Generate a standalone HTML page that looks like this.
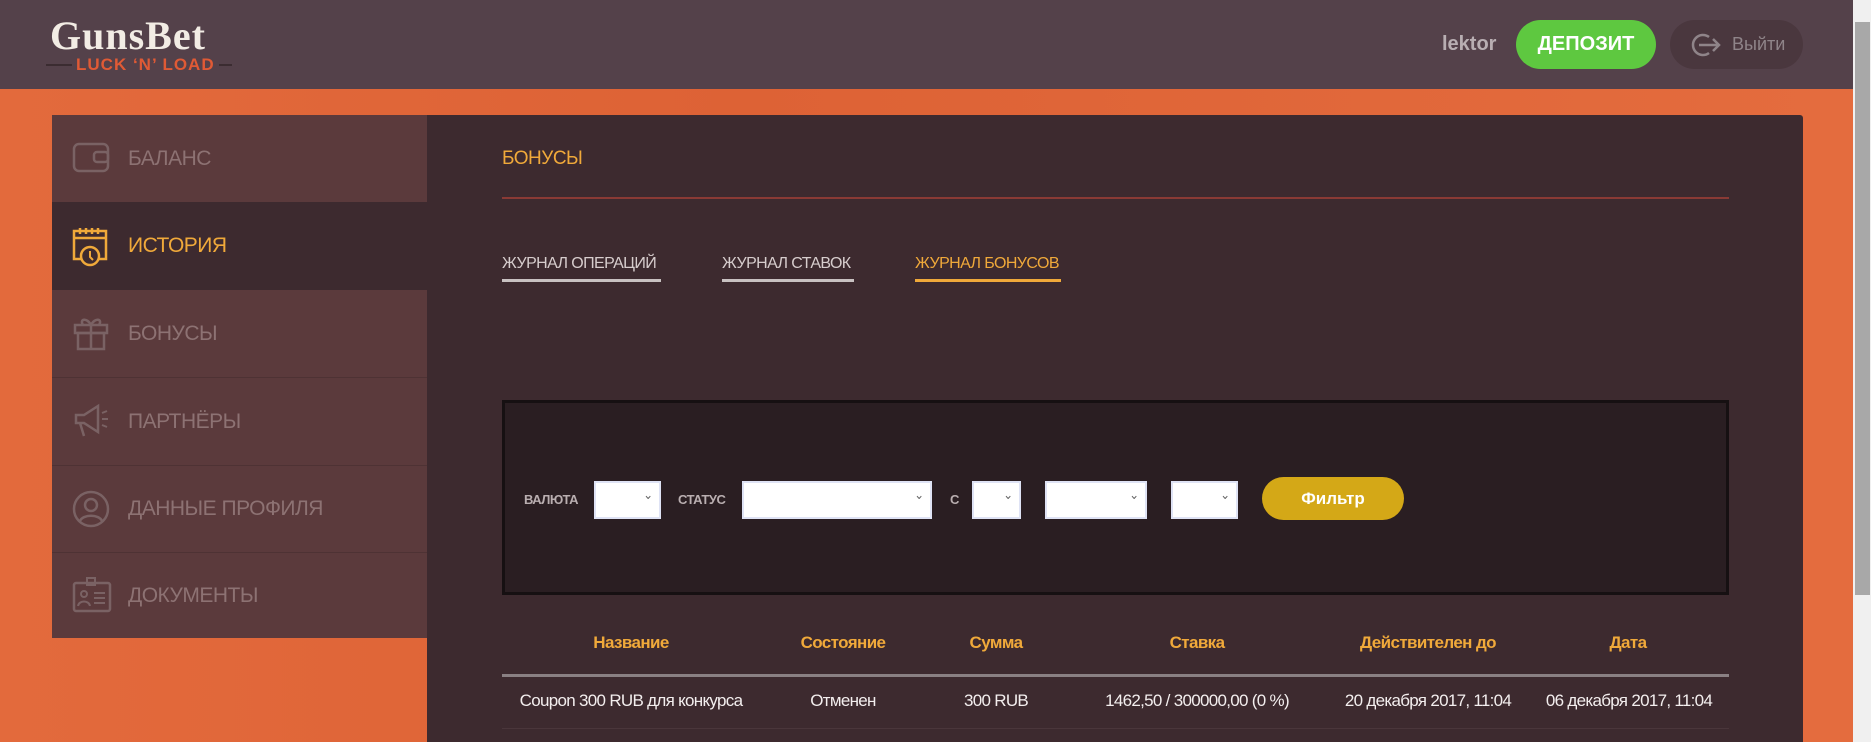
<!DOCTYPE html>
<html><head><meta charset="utf-8"><style>
*{margin:0;padding:0;box-sizing:border-box}
body{width:1871px;height:742px;overflow:hidden;position:relative;background:#e0673b;font-family:"Liberation Sans Narrow","Liberation Sans","DejaVu Sans Condensed",sans-serif;}
.bg{position:absolute;left:0;top:89px;width:1853px;height:653px;background:linear-gradient(90deg,#e36a3c 0%,#dd6235 40%,#e46c3e 100%)}
.hdr{position:absolute;left:0;top:0;width:1853px;height:89px;background:#54414a}
.abs{position:absolute;white-space:nowrap}
.side{position:absolute;left:52px;top:115px;width:375px;height:523px;background:#5b3a3c}
.item{position:absolute;left:0;width:375px;height:88px;border-bottom:1px solid #4e3234;color:#8d7273;font-size:21px;line-height:88px;padding-left:76px;letter-spacing:-.5px}
.item.act{background:#3d2a2f;color:#f0a93a;border:none}
.item svg{position:absolute;left:20px;top:25px}
.main{position:absolute;left:427px;top:115px;width:1376px;height:627px;background:#3d2a2f;border-radius:0 3px 0 0}
.tab{position:absolute;top:255px;font-size:16px;color:#d7cdcd;padding-bottom:6px;border-bottom:3px solid #c8c1c1;white-space:nowrap;letter-spacing:-.6px}
.fbox{position:absolute;left:502px;top:400px;width:1227px;height:195px;background:#2a1e22;border:3px solid #161012}
.lbl{position:absolute;top:492px;font-size:13px;font-weight:bold;color:#b9aeb0;letter-spacing:-.5px}
.sel{position:absolute;top:481px;height:38px;background:#fff;border:2px solid #dfe3f5}
.sel:after{content:"⌄";position:absolute;right:6px;top:4px;font-size:13px;color:#666}
.th{position:absolute;top:633px;font-size:17px;font-weight:bold;color:#f0a93a;transform:translateX(-50%);white-space:nowrap;letter-spacing:-.6px}
.td{position:absolute;top:691px;font-size:17px;color:#f3eeee;transform:translateX(-50%);white-space:nowrap;letter-spacing:-.7px}
</style></head><body>
<div class="bg"></div>
<div class="hdr"></div>
<div class="abs" style="left:50px;top:12px;color:#f2ece4;font-family:'Liberation Serif',serif;font-size:40px;font-weight:bold;letter-spacing:1px">GunsBet</div>
<div class="abs" style="left:46px;top:64px;width:186px;height:2px;background:#3b2c31"></div>
<div class="abs" style="left:72px;top:55px;padding:0 4px;background:#54414a;color:#e05a35;font-size:17px;font-weight:bold;letter-spacing:1px">LUCK ‘N’ LOAD</div>
<div class="abs" style="left:1442px;top:33px;color:#b8aeb2;font-size:20px;font-weight:bold">lektor</div>
<div class="abs" style="left:1516px;top:20px;width:140px;height:49px;border-radius:25px;background:#5ec840;color:#fff;font-size:20px;font-weight:bold;text-align:center;line-height:49px">ДЕПОЗИТ</div>
<div class="abs" style="left:1670px;top:20px;width:133px;height:49px;border-radius:25px;background:#4a373e;color:#8f8489;font-size:18px;line-height:49px;padding-left:62px">Выйти</div>
<svg class="abs" style="left:1690px;top:32px" width="34" height="26" viewBox="0 0 34 26"><path d="M19 5A10 10 0 1 0 19 21" fill="none" stroke="#8f8489" stroke-width="2.5"/><path d="M9 13H29M23 7l6 6-6 6" fill="none" stroke="#8f8489" stroke-width="2.5"/></svg>
<div class="abs" style="left:1853px;top:0;width:18px;height:742px;background:#f0f0f0"></div>
<div class="abs" style="left:1855px;top:22px;width:15px;height:573px;background:#a8a8a8"></div>

<div class="side">
 <div class="item" style="top:0"><svg width="38" height="34" viewBox="0 0 38 34"><rect x="2" y="4" width="34" height="27" rx="5" fill="none" stroke="#7a6264" stroke-width="2.5"/><rect x="22" y="12" width="14" height="10" rx="3" fill="none" stroke="#7a6264" stroke-width="2.5"/></svg>БАЛАНС</div>
 <div class="item act" style="top:87px"><svg width="38" height="40" viewBox="0 0 38 40"><rect x="2" y="4" width="32" height="28" fill="none" stroke="#f0a93a" stroke-width="2.5"/><path d="M2 11H34M8 1v6M14 1v6M20 1v6M26 1v6" stroke="#f0a93a" stroke-width="2.5"/><circle cx="18" cy="29" r="9" fill="#3d2a2f" stroke="#f0a93a" stroke-width="2.5"/><path d="M18 24v6l3 3" fill="none" stroke="#f0a93a" stroke-width="2"/></svg>ИСТОРИЯ</div>
 <div class="item" style="top:175px"><svg width="38" height="36" viewBox="0 0 38 36"><rect x="3" y="10" width="32" height="8" fill="none" stroke="#7a6264" stroke-width="2.5"/><rect x="6" y="18" width="26" height="16" fill="none" stroke="#7a6264" stroke-width="2.5"/><path d="M19 10v24M19 10c-4-8-12-6-8 0M19 10c4-8 12-6 8 0" fill="none" stroke="#7a6264" stroke-width="2.5"/></svg>БОНУСЫ</div>
 <div class="item" style="top:263px"><svg width="40" height="36" viewBox="0 0 40 36"><path d="M4 12h8l14-9v26l-14-9H4zM8 20l4 13" fill="none" stroke="#7a6264" stroke-width="2.5"/><path d="M30 10l5-2M30 16h6M30 22l5 2" stroke="#7a6264" stroke-width="2"/></svg>ПАРТНЁРЫ</div>
 <div class="item" style="top:350px"><svg width="40" height="40" viewBox="0 0 40 40"><circle cx="19" cy="19" r="17" fill="none" stroke="#7a6264" stroke-width="2.5"/><circle cx="19" cy="15" r="6" fill="none" stroke="#7a6264" stroke-width="2.5"/><path d="M8 31c3-7 19-7 22 0" fill="none" stroke="#7a6264" stroke-width="2.5"/></svg>ДАННЫЕ ПРОФИЛЯ</div>
 <div class="item" style="top:437px;border:none"><svg width="40" height="36" viewBox="0 0 40 36"><rect x="2" y="6" width="36" height="28" rx="2" fill="none" stroke="#7a6264" stroke-width="2.5"/><rect x="15" y="1" width="8" height="7" fill="none" stroke="#7a6264" stroke-width="2"/><circle cx="12" cy="17" r="3" fill="none" stroke="#7a6264" stroke-width="2"/><path d="M6 29c1-6 11-6 12 0M22 16h11M22 21h11M22 26h11" fill="none" stroke="#7a6264" stroke-width="2"/></svg>ДОКУМЕНТЫ</div>
</div>

<div class="main"></div>
<div class="abs" style="left:502px;top:148px;color:#f0a93a;font-size:19px;letter-spacing:-.5px">БОНУСЫ</div>
<div class="abs" style="left:502px;top:197px;width:1227px;height:2px;background:#8a3a35"></div>
<div class="tab" style="left:502px;width:159px">ЖУРНАЛ ОПЕРАЦИЙ</div>
<div class="tab" style="left:722px;width:132px">ЖУРНАЛ СТАВОК</div>
<div class="tab" style="left:915px;width:146px;color:#f0a93a;border-color:#f0a93a">ЖУРНАЛ БОНУСОВ</div>

<div class="fbox"></div>
<div class="lbl" style="left:524px">ВАЛЮТА</div>
<div class="sel" style="left:594px;width:67px"></div>
<div class="lbl" style="left:678px">СТАТУС</div>
<div class="sel" style="left:742px;width:190px"></div>
<div class="lbl" style="left:950px">С</div>
<div class="sel" style="left:972px;width:49px"></div>
<div class="sel" style="left:1045px;width:102px"></div>
<div class="sel" style="left:1171px;width:67px"></div>
<div class="abs" style="left:1262px;top:477px;width:142px;height:43px;border-radius:22px;background:#d4a817;color:#fff;font-size:17px;font-weight:bold;text-align:center;line-height:43px">Фильтр</div>

<div class="th" style="left:631px">Название</div>
<div class="th" style="left:843px">Состояние</div>
<div class="th" style="left:996px">Сумма</div>
<div class="th" style="left:1197px">Ставка</div>
<div class="th" style="left:1428px">Действителен до</div>
<div class="th" style="left:1628px">Дата</div>
<div class="abs" style="left:502px;top:674px;width:1227px;height:3px;background:#8a8083"></div>
<div class="td" style="left:631px">Coupon 300 RUB для конкурса</div>
<div class="td" style="left:843px">Отменен</div>
<div class="td" style="left:996px">300 RUB</div>
<div class="td" style="left:1197px">1462,50 / 300000,00 (0 %)</div>
<div class="td" style="left:1428px">20 декабря 2017, 11:04</div>
<div class="td" style="left:1629px">06 декабря 2017, 11:04</div>
<div class="abs" style="left:502px;top:728px;width:1227px;height:1px;background:#4a363b"></div>
</body></html>
